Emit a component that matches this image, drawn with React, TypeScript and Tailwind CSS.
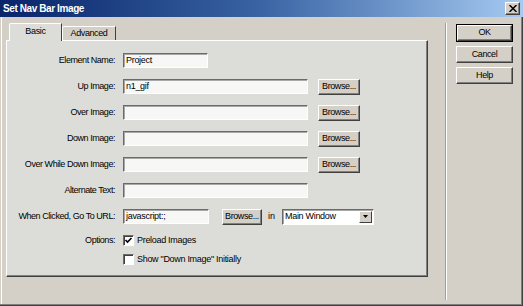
import React from "react";

const FONT = '"Liberation Sans", Arial, sans-serif';

function Field({ w, value }: { w: number; value?: string }) {
  return (
    <div
      className="h-[15px] bg-[#F7F7F5] border border-t-[#6A6A6A] border-l-[#6A6A6A] border-b-[#FFFFFF] border-r-[#FFFFFF] shadow-[inset_1px_1px_0_#A8A8A8] pl-[2px] text-[9px] leading-[13px] tracking-[-0.3px] text-black overflow-hidden whitespace-nowrap"
      style={{ width: w }}
    >
      {value}
    </div>
  );
}

function Btn({ w, h, label }: { w: number; h: number; label: string }) {
  return (
    <div
      className="flex items-center justify-center bg-[#D4D0C8] border border-t-white border-l-white border-r-[#404040] border-b-[#404040] shadow-[inset_-1px_-1px_0_#808080] text-[9px] tracking-[-0.4px] text-black"
      style={{ width: w, height: h }}
    >
      {label}
    </div>
  );
}

function Row({ label, children }: { label: string; children?: React.ReactNode }) {
  return (
    <div className="flex items-center h-[15px]">
      <div className="w-[108px] text-right text-[9px] tracking-[-0.45px] text-black whitespace-nowrap">{label}</div>
      <div className="ml-[8px] flex items-center">{children}</div>
    </div>
  );
}

function Check({ checked }: { checked?: boolean }) {
  return (
    <div className="w-[11px] h-[11px] bg-white border border-t-[#6A6A6A] border-l-[#6A6A6A] border-b-white border-r-white shadow-[inset_1px_1px_0_#404040] flex items-center justify-center">
      {checked && (
        <svg width="9" height="9" viewBox="0 0 9 9">
          <path d="M1.5 4 L3.5 6 L7.5 2" stroke="#000" strokeWidth="1.6" fill="none" />
        </svg>
      )}
    </div>
  );
}

export default function App() {
  return (
    <div className="w-[523px] h-[306px] bg-[#D4D0C8] flex flex-col overflow-hidden" style={{ fontFamily: FONT }}>
      {/* Title bar */}
      <div className="h-[17px] flex items-center pl-[3px] pr-[3px] bg-linear-to-r from-[#0A246A] via-[#3A64A4] to-[#A6CAF0]">
        <div className="text-white font-bold text-[10px] tracking-[-0.4px] leading-none">Set Nav Bar Image</div>
        <div className="ml-auto w-[15px] h-[13px] bg-[#D4D0C8] border border-t-white border-l-white border-r-[#404040] border-b-[#404040] shadow-[inset_-1px_-1px_0_#808080] flex items-center justify-center">
          <svg width="8" height="7" viewBox="0 0 8 7">
            <path d="M0.5 0 L7.5 7 M7.5 0 L0.5 7" stroke="#000" strokeWidth="1.5" />
          </svg>
        </div>
      </div>

      {/* Body */}
      <div className="flex-1 flex border-r border-b border-r-[#404040] border-b-[#404040] shadow-[inset_-1px_-1px_0_#808080,inset_1px_0_0_#D4D0C8,inset_2px_0_0_#FFFFFF]">
        {/* Left: tabs + panel */}
        <div className="ml-[6px] pt-[6px] w-[422px] flex flex-col">
          <div className="h-[17px] flex items-end pl-[3px]">
            <div className="relative z-10 -mb-px h-[18px] w-[53px] bg-[#DCDDD9] border-t border-l border-t-white border-l-white border-r border-r-[#404040] rounded-tl-[2px] flex items-center justify-center text-[9px] tracking-[-0.3px] text-black pb-[2px]">
              Basic
            </div>
            <div className="h-[14px] w-[54px] bg-[#D4D0C8] border-t border-l border-t-white border-l-white border-r border-r-[#404040] rounded-tl-[2px] flex items-center justify-center text-[9px] tracking-[-0.4px] text-black">
              Advanced
            </div>
          </div>
          <div className="h-[237px] bg-[#DCDDD9] border border-t-white border-l-white border-r-[#404040] border-b-[#404040] shadow-[inset_-1px_-1px_0_#808080] pt-[12px] flex flex-col gap-[11px]">
            <Row label="Element Name:">
              <Field w={85} value="Project" />
            </Row>
            <Row label="Up Image:">
              <Field w={185} value="n1_gif" />
              <div className="ml-[10px]"><Btn w={42} h={16} label="Browse..." /></div>
            </Row>
            <Row label="Over Image:">
              <Field w={185} />
              <div className="ml-[10px]"><Btn w={42} h={16} label="Browse..." /></div>
            </Row>
            <Row label="Down Image:">
              <Field w={185} />
              <div className="ml-[10px]"><Btn w={42} h={16} label="Browse..." /></div>
            </Row>
            <Row label="Over While Down Image:">
              <Field w={185} />
              <div className="ml-[10px]"><Btn w={42} h={16} label="Browse..." /></div>
            </Row>
            <Row label="Alternate Text:">
              <Field w={185} />
            </Row>
            <Row label="When Clicked, Go To URL:">
              <Field w={86} value="javascript:;" />
              <div className="ml-[13px]"><Btn w={40} h={16} label="Browse..." /></div>
              <div className="ml-[6px] text-[9px] text-black">in</div>
              <div className="ml-[7px] w-[92px] h-[16px] bg-white border border-t-[#6A6A6A] border-l-[#6A6A6A] border-b-white border-r-white shadow-[inset_1px_1px_0_#A8A8A8] flex items-center">
                <div className="flex-1 pl-[2px] text-[9px] tracking-[-0.3px] text-black">Main Window</div>
                <div className="w-[13px] h-[12px] mr-[1px] bg-[#D4D0C8] border border-t-white border-l-white border-r-[#404040] border-b-[#404040] flex items-center justify-center">
                  <svg width="5" height="3" viewBox="0 0 5 3"><path d="M0 0 H5 L2.5 3 Z" fill="#000" /></svg>
                </div>
              </div>
            </Row>
            <div className="flex flex-col gap-[8px]">
              <div className="flex items-center h-[11px]">
                <div className="w-[108px] text-right text-[9px] tracking-[-0.45px] text-black">Options:</div>
                <div className="ml-[8px] flex items-center">
                  <Check checked />
                  <div className="ml-[3px] text-[9px] tracking-[-0.3px] text-black">Preload Images</div>
                </div>
              </div>
              <div className="flex items-center h-[11px]">
                <div className="w-[108px]" />
                <div className="ml-[8px] flex items-center">
                  <Check />
                  <div className="ml-[3px] text-[9px] tracking-[-0.3px] text-black">Show "Down Image" Initially</div>
                </div>
              </div>
            </div>
          </div>
        </div>

        {/* Separator */}
        <div className="ml-[17px] mt-[6px] h-[277px] w-[2px] border-l border-l-[#A0A0A0] border-r border-r-white" />

        {/* Buttons */}
        <div className="ml-[9px] mt-[7px] w-[57px] flex flex-col">
          <div className="h-[18px] border border-black">
            <Btn w={55} h={16} label="OK" />
          </div>
          <div className="mt-[4px]"><Btn w={57} h={17} label="Cancel" /></div>
          <div className="mt-[4px]"><Btn w={57} h={17} label="Help" /></div>
        </div>
      </div>
    </div>
  );
}
